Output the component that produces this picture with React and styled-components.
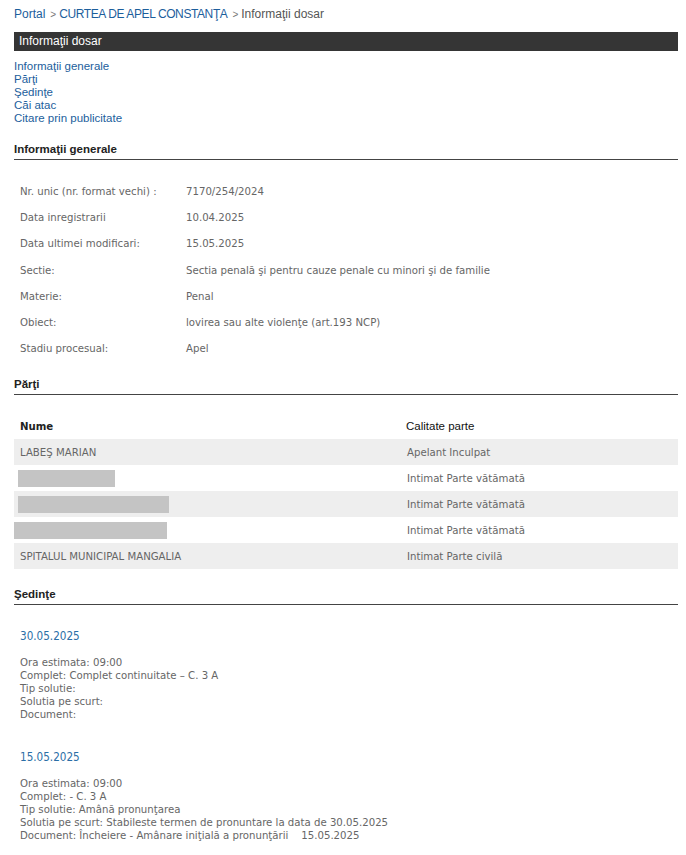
import { createGlobalStyle } from "styled-components";
import styled from "styled-components";

const GlobalStyle = createGlobalStyle`
  body {
    margin: 0;
    background: #fff;
    font-family: "Liberation Sans", Arial, sans-serif;
  }
`;

const info = [
  { label: "Nr. unic (nr. format vechi) :", value: "7170/254/2024" },
  { label: "Data inregistrarii", value: "10.04.2025" },
  { label: "Data ultimei modificari:", value: "15.05.2025" },
  { label: "Sectie:", value: "Sectia penală şi pentru cauze penale cu minori şi de familie" },
  { label: "Materie:", value: "Penal" },
  { label: "Obiect:", value: "lovirea sau alte violenţe (art.193 NCP)" },
  { label: "Stadiu procesual:", value: "Apel" }
];

const parti = [
  { name: "LABEŞ MARIAN", role: "Apelant Inculpat" },
  { hidden: { w: 97, x: 4 }, role: "Intimat Parte vătămată" },
  { hidden: { w: 151, x: 4 }, role: "Intimat Parte vătămată" },
  { hidden: { w: 153, x: 0 }, role: "Intimat Parte vătămată" },
  { name: "SPITALUL MUNICIPAL MANGALIA", role: "Intimat Parte civilă" }
];

const sedinte = [
  {
    date: "30.05.2025",
    lines: [
      "Ora estimata: 09:00",
      "Complet: Complet continuitate – C. 3 A",
      "Tip solutie:",
      "Solutia pe scurt:",
      "Document:"
    ]
  },
  {
    date: "15.05.2025",
    lines: [
      "Ora estimata: 09:00",
      "Complet: - C. 3 A",
      "Tip solutie: Amână pronunţarea",
      "Solutia pe scurt: Stabileste termen de pronuntare la data de 30.05.2025",
      "Document: Încheiere - Amânare iniţială a pronunţării\u00a0\u00a0\u00a0\u00a015.05.2025"
    ]
  }
];

function App() {
  return (
    <Page>
      <GlobalStyle />
      <Breadcrumb>
        <Link>Portal</Link>
        <Sep>&gt;</Sep>
        <Link $tight>CURTEA DE APEL CONSTANŢA</Link>
        <Sep>&gt;</Sep>
        <span>Informaţii dosar</span>
      </Breadcrumb>
      <TitleBar>Informaţii dosar</TitleBar>
      <Menu>
        <Link>Informaţii generale</Link>
        <Link>Părţi</Link>
        <Link>Şedinţe</Link>
        <Link>Căi atac</Link>
        <Link>Citare prin publicitate</Link>
      </Menu>

      <Section>
        <SectionTitle>Informaţii generale</SectionTitle>
        <InfoList>
          {info.map(row => (
            <InfoRow key={row.label}>
              <span>{row.label}</span>
              <span>{row.value}</span>
            </InfoRow>
          ))}
        </InfoList>
      </Section>

      <Section $gap={16}>
        <SectionTitle>Părţi</SectionTitle>
        <Table>
          <HeadRow>
            <span>Nume</span>
            <HeadCol>Calitate parte</HeadCol>
          </HeadRow>
          {parti.map((p, i) => (
            <PartyRow key={i} $odd={i % 2 === 0}>
              {p.hidden ? (
                <Redacted style={{ width: p.hidden.w, marginLeft: p.hidden.x }} />
              ) : (
                <Cell>{p.name}</Cell>
              )}
              <Cell>{p.role}</Cell>
            </PartyRow>
          ))}
        </Table>
      </Section>

      <Section $gap={19}>
        <SectionTitle>Şedinţe</SectionTitle>
        {sedinte.map(s => (
          <Hearing key={s.date}>
            <HearingDate>{s.date}</HearingDate>
            <HearingLines>
              {s.lines.map(l => (
                <div key={l}>{l}</div>
              ))}
            </HearingLines>
          </Hearing>
        ))}
      </Section>
    </Page>
  );
}

const Page = styled.div`
  padding: 6px 8px 0 14px;
`;

const Breadcrumb = styled.div`
  display: flex;
  align-items: center;
  font-size: 12px;
  color: #555;
  height: 16px;
  margin-bottom: 10px;
`;

const Link = styled.a`
  color: #1c5e9c;
  cursor: pointer;
  letter-spacing: ${p => (p.$tight ? "-0.4px" : "normal")};
`;

const Sep = styled.span`
  color: #777;
  font-size: 10px;
  margin: 0 3px 0 5px;
`;

const TitleBar = styled.div`
  background: #353535;
  color: #fff;
  font-size: 12px;
  height: 19px;
  line-height: 19px;
  padding-left: 5px;
`;

const Menu = styled.nav`
  display: flex;
  flex-direction: column;
  font-size: 11.5px;
  line-height: 13px;
  margin-top: 9px;
`;

const Section = styled.section`
  margin-top: ${p => p.$gap || 18}px;
`;

const SectionTitle = styled.h3`
  margin: 0;
  font-size: 11.5px;
  font-weight: bold;
  color: #222;
  padding-bottom: 4px;
  border-bottom: 1px solid #444;
`;

const InfoList = styled.div`
  display: flex;
  flex-direction: column;
  padding-top: 18px;
`;

const InfoRow = styled.div`
  display: grid;
  grid-template-columns: 166px 1fr;
  height: 26.3px;
  align-items: center;
  padding-left: 6px;
  font-family: "DejaVu Sans Condensed", "DejaVu Sans", Tahoma, sans-serif;
  font-size: 11.3px;
  color: #666;
`;

const Table = styled.div`
  display: flex;
  flex-direction: column;
  padding-top: 18px;
`;

const HeadRow = styled.div`
  display: grid;
  grid-template-columns: 386px 1fr;
  height: 26px;
  align-items: center;
  padding-left: 6px;
  font-family: "DejaVu Sans Condensed", "DejaVu Sans", Tahoma, sans-serif;
  font-size: 11.3px;
  font-weight: bold;
  color: #222;
`;

const HeadCol = styled.span`
  font-family: "Liberation Sans", Arial, sans-serif;
  font-size: 11.5px;
  font-weight: normal;
  color: #111;
`;

const PartyRow = styled.div`
  display: grid;
  grid-template-columns: 387px 1fr;
  height: 26px;
  align-items: center;
  background: ${p => (p.$odd ? "#eeeeee" : "#fff")};
`;

const Cell = styled.span`
  padding-left: 6px;
  font-family: "DejaVu Sans Condensed", "DejaVu Sans", Tahoma, sans-serif;
  font-size: 11.3px;
  color: #666;
`;

const Redacted = styled.div`
  height: 17px;
  background: #c4c4c4;
`;

const Hearing = styled.div`
  padding: 24px 0 0 6px;
  font-family: "DejaVu Sans Condensed", "DejaVu Sans", Tahoma, sans-serif;
  font-size: 11.3px;
`;

const HearingDate = styled.div`
  color: #2a6ea6;
  font-size: 11.6px;
`;

const HearingLines = styled.div`
  margin-top: 13px;
  margin-bottom: 5px;
  line-height: 13px;
  color: #666;
`;

export default App;
